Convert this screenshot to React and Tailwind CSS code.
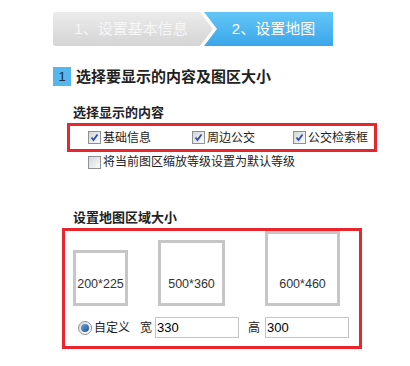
import React from "react";

const cjk = { fontFamily: '"Liberation Sans", "Noto Sans CJK SC", sans-serif' };

function Check({ checked }) {
  return (
    <span className="relative inline-block w-[13px] h-[13px] shrink-0 border border-[#8c9298] bg-gradient-to-br from-[#d4d6d8] to-[#fbfbfb]">
      {checked && (
        <svg
          viewBox="0 0 11 11"
          className="absolute left-0 top-0 w-[11px] h-[11px]"
        >
          <path
            d="M2.5 5.5 L4.5 8 L8.5 2.5"
            fill="none"
            stroke="#2f4f9f"
            strokeWidth="1.8"
          />
        </svg>
      )}
    </span>
  );
}

function Radio() {
  return (
    <span className="relative inline-flex items-center justify-center w-[14px] h-[14px] shrink-0 rounded-full border border-[#8c9298] bg-gradient-to-br from-[#d8d8d8] to-white">
      <span className="w-[8px] h-[8px] rounded-full bg-gradient-to-br from-[#6fa4dc] to-[#1d4f8f]" />
    </span>
  );
}

function SizeBox({ w, h, label }) {
  return (
    <div
      className={`${w} ${h} border-[3px] border-[#c6c6c6] bg-white flex items-end justify-center pb-[12px]`}
    >
      <span className="text-[12.5px] leading-[14px] text-[#333]">{label}</span>
    </div>
  );
}

export default function App() {
  return (
    <div className="w-[410px] h-[366px] bg-white pt-[12px] text-[#222]" style={cjk}>
      {/* 步骤条 */}
      <div className="ml-[53px] w-[280px] h-[34px] flex relative">
        <div className="w-[160px] h-full flex items-center justify-center pr-[4px] rounded-l-[3px] bg-gradient-to-b from-[#ececec] to-[#d4d4d4] text-[15px] text-[#f6f6f6] [clip-path:polygon(0_0,calc(100%-13px)_0,100%_50%,calc(100%-13px)_100%,0_100%)]">
          1、设置基本信息
        </div>
        <div className="-ml-[9px] flex-1 h-full flex items-center justify-center pl-[10px] bg-gradient-to-b from-[#62c6f6] to-[#3aa6ea] text-[15px] text-white [clip-path:polygon(0_0,100%_0,100%_100%,0_100%,13px_50%)]">
          2、设置地图
        </div>
      </div>

      {/* 标题 */}
      <div className="ml-[53px] mt-[21px] h-[19px] flex items-center">
        <span className="w-[18px] h-[19px] bg-[#56b6ee] flex items-center justify-center text-[13px] text-[#1d2b3a]">
          1
        </span>
        <span className="ml-[5px] text-[15px] font-bold leading-[19px]">
          选择要显示的内容及图区大小
        </span>
      </div>

      {/* 显示内容 */}
      <div className="ml-[73px] mt-[19px] h-[16px] leading-[16px] text-[13px] font-bold">
        选择显示的内容
      </div>
      <div className="ml-[67px] mt-[2px] w-[310px] h-[29px] border-[3px] border-[#e9262c] flex items-center pl-[18px] text-[12px]">
        <label className="w-[104px] flex items-center gap-[2px]">
          <Check checked />
          <span>基础信息</span>
        </label>
        <label className="w-[101px] flex items-center gap-[2px]">
          <Check checked />
          <span>周边公交</span>
        </label>
        <label className="flex items-center gap-[2px]">
          <Check checked />
          <span>公交检索框</span>
        </label>
      </div>
      <label className="ml-[88px] mt-[2px] h-[16px] flex items-center gap-[2px] text-[12px]">
        <Check />
        <span>将当前图区缩放等级设置为默认等级</span>
      </label>

      {/* 地图区域大小 */}
      <div className="ml-[73px] mt-[40px] h-[16px] leading-[16px] text-[13px] font-bold">
        设置地图区域大小
      </div>
      <div className="ml-[62px] mt-[2px] w-[300px] h-[121px] border-[3px] border-[#e9262c] flex flex-col">
        <div className="flex items-end pl-[8px]" style={{ fontFamily: '"Liberation Sans", Arial, sans-serif' }}>
          <SizeBox w="w-[55px]" h="h-[56px]" label="200*225" />
          <div className="ml-[30px]">
            <SizeBox w="w-[67px]" h="h-[66px]" label="500*360" />
          </div>
          <div className="ml-[40px]">
            <SizeBox w="w-[75px]" h="h-[75px]" label="600*460" />
          </div>
        </div>
        <div className="mt-[11px] flex items-center pl-[13px] text-[12px]">
          <Radio />
          <span className="ml-[2px]">自定义</span>
          <span className="ml-[10px]">宽</span>
          <input
            readOnly
            value="330"
            className="ml-[3px] w-[84px] h-[21px] border border-[#c3c3cc] px-[1px] text-[13px] text-black outline-none"
            style={{ fontFamily: '"Liberation Sans", Arial, sans-serif' }}
          />
          <span className="ml-[9px]">高</span>
          <input
            readOnly
            value="300"
            className="ml-[5px] w-[84px] h-[21px] border border-[#c3c3cc] px-[1px] text-[13px] text-black outline-none"
            style={{ fontFamily: '"Liberation Sans", Arial, sans-serif' }}
          />
        </div>
      </div>
    </div>
  );
}
